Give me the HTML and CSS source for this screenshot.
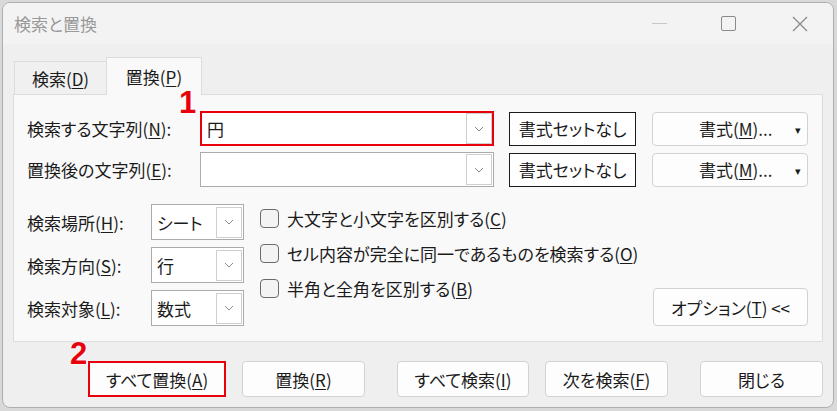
FILE: index.html
```html
<!DOCTYPE html>
<html lang="ja">
<head>
  <meta charset="UTF-8" />
  <title>検索と置換</title>
  <link rel="stylesheet" href="styles.css">
</head>
<body>
  <div class="window">
    <!-- タイトルバー -->
    <div class="titlebar">
      <span class="title">検索と置換</span>
      <div class="controls">
        <span class="ctrl-min"></span>
        <span class="ctrl-max"></span>
        <svg class="ctrl-close" width="16" height="16" viewBox="0 0 16 16">
          <path d="M1 1 L15 15 M15 1 L1 15" stroke="#8a8a8a" stroke-width="1.3" fill="none"/>
        </svg>
      </div>
    </div>

    <!-- タブ -->
    <div class="tabs">
      <div class="tab">検索(<u>D</u>)</div>
      <div class="tab active">置換(<u>P</u>)</div>
    </div>

    <div class="panel">
      <div class="field-row">
        <label class="field-label">検索する文字列(<u>N</u>):</label>
        <div class="combo combo-marked">
          <span class="combo-text">円</span>
          <span class="drop"><svg width="10" height="6" viewBox="0 0 10 6"><path d="M1 1 L5 5 L9 1" stroke="#8c8c8c" fill="none"/></svg></span>
        </div>
        <button class="plain-btn">書式セットなし</button>
        <button class="format-btn"><span>書式(<u>M</u>)...</span><span class="caret">▾</span></button>
      </div>
      <div class="field-row">
        <label class="field-label">置換後の文字列(<u>E</u>):</label>
        <div class="combo">
          <span class="combo-text"></span>
          <span class="drop"><svg width="10" height="6" viewBox="0 0 10 6"><path d="M1 1 L5 5 L9 1" stroke="#8c8c8c" fill="none"/></svg></span>
        </div>
        <button class="plain-btn">書式セットなし</button>
        <button class="format-btn"><span>書式(<u>M</u>)...</span><span class="caret">▾</span></button>
      </div>

      <div class="options">
        <div class="select-list">
          <div class="select-row">
            <label class="select-label">検索場所(<u>H</u>):</label>
            <div class="select"><span class="select-text">シート</span><span class="drop"><svg width="10" height="6" viewBox="0 0 10 6"><path d="M1 1 L5 5 L9 1" stroke="#8c8c8c" fill="none"/></svg></span></div>
          </div>
          <div class="select-row">
            <label class="select-label">検索方向(<u>S</u>):</label>
            <div class="select"><span class="select-text">行</span><span class="drop"><svg width="10" height="6" viewBox="0 0 10 6"><path d="M1 1 L5 5 L9 1" stroke="#8c8c8c" fill="none"/></svg></span></div>
          </div>
          <div class="select-row">
            <label class="select-label">検索対象(<u>L</u>):</label>
            <div class="select"><span class="select-text">数式</span><span class="drop"><svg width="10" height="6" viewBox="0 0 10 6"><path d="M1 1 L5 5 L9 1" stroke="#8c8c8c" fill="none"/></svg></span></div>
          </div>
        </div>

        <div class="check-list">
          <div class="check-row"><span class="box"></span>大文字と小文字を区別する(<u>C</u>)</div>
          <div class="check-row"><span class="box"></span>セル内容が完全に同一であるものを検索する(<u>O</u>)</div>
          <div class="check-row"><span class="box"></span>半角と全角を区別する(<u>B</u>)</div>
        </div>

        <button class="option-btn">オプション(<u>T</u>) &lt;&lt;</button>
      </div>
    </div>

    <div class="actions">
      <button class="act-btn act-marked">すべて置換(<u>A</u>)</button>
      <button class="act-btn">置換(<u>R</u>)</button>
      <button class="act-btn act-wide">すべて検索(<u>I</u>)</button>
      <button class="act-btn">次を検索(<u>F</u>)</button>
      <button class="act-btn act-close">閉じる</button>
    </div>

    <!-- 注釈 -->
    <span class="badge badge-1">1</span>
    <span class="badge badge-2">2</span>
  </div>
</body>
</html>
```

FILE: styles.css
```css
* {
  box-sizing: border-box;
}
body {
  margin: 0;
  padding: 2px 3px 3px 2px;
  width: 837px;
  height: 411px;
  overflow: hidden;
  background-color: #d9d9d9;
  font-family: "Noto Sans CJK JP", "Noto Sans", sans-serif;
  font-feature-settings: "palt";
  font-size: 17px;
  color: #1b1b1b;
}
u {
  text-underline-offset: 2px;
}
button {
  font: inherit;
  color: inherit;
  margin: 0;
  padding: 0;
  cursor: pointer;
}
.window {
  position: relative;
  height: 406px;
  border: 1px solid #aeaeae;
  border-radius: 8px;
  background-color: #efefef;
  overflow: hidden;
}
.titlebar {
  height: 41px;
  display: flex;
  align-items: center;
  padding-left: 11px;
  background-color: #f3f3f3;
}
.title {
  font-size: 17px;
  color: #999999;
}
.controls {
  margin-left: auto;
  display: flex;
  align-items: center;
  padding-right: 25px;
}
.ctrl-min {
  width: 15px;
  height: 1px;
  background-color: #c8c8c8;
  margin-right: 54px;
}
.ctrl-max {
  width: 15px;
  height: 15px;
  border: 1.3px solid #8a8a8a;
  border-radius: 2px;
  margin-right: 56px;
}
.tabs {
  display: flex;
  align-items: flex-end;
  padding: 13px 0 0 11px;
  height: 50px;
}
.tab {
  width: 92px;
  height: 33px;
  display: flex;
  align-items: center;
  justify-content: center;
  border: 1px solid #dcdcdc;
  border-bottom: none;
  border-right: none;
  background-color: #f0f0f0;
}
.tab.active {
  width: 96px;
  height: 38px;
  margin-bottom: -1px;
  position: relative;
  z-index: 1;
  border-right: 1px solid #dcdcdc;
  background-color: #f9f9f9;
}
.panel {
  margin: 0 10px;
  height: 248px;
  border: 1px solid #dcdcdc;
  background-color: #f9f9f9;
  padding: 16px 14px 0 13px;
}
.field-row {
  display: flex;
  align-items: center;
  height: 35px;
  margin-bottom: 6px;
}
.field-label {
  width: 173px;
}
.combo {
  width: 294px;
  height: 35px;
  display: flex;
  align-items: center;
  border: 1px solid #ababab;
  background-color: #ffffff;
  padding: 1px 1px 1px 6px;
}
.combo-marked {
  border: 2px solid #e8000b;
  padding: 0 0 0 5px;
}
.combo-text {
  flex: 1;
}
.drop {
  width: 26px;
  height: 31px;
  display: flex;
  align-items: center;
  justify-content: center;
  border: 1px solid #cfcfcf;
  background-color: #ffffff;
}
.plain-btn {
  width: 127px;
  height: 34px;
  margin-left: 15px;
  border: 1px solid #1b1b1b;
  background-color: #ffffff;
}
.format-btn {
  width: 156px;
  height: 34px;
  margin-left: 16px;
  display: flex;
  align-items: center;
  padding: 0 6px 0 46px;
  border: 1px solid #d2d2d2;
  border-radius: 4px;
  background-color: #fdfdfd;
}
.caret {
  margin-left: auto;
  font-size: 11px;
}
.options {
  display: flex;
  align-items: flex-end;
  margin-top: 17px;
}
.select-list {
  display: flex;
  flex-direction: column;
  gap: 7px;
}
.select-row {
  display: flex;
  align-items: center;
}
.select-label {
  width: 124px;
}
.select {
  width: 93px;
  height: 36px;
  display: flex;
  align-items: center;
  padding: 1px 1px 1px 5px;
  border: 1px solid #ababab;
  background-color: #ffffff;
}
.select-text {
  flex: 1;
}
.check-list {
  align-self: flex-start;
  margin: -3px 0 0 16px;
}
.check-row {
  height: 35px;
  display: flex;
  align-items: center;
}
.box {
  width: 19px;
  height: 19px;
  margin-right: 8px;
  border: 1px solid #6b6b6b;
  border-radius: 4px;
  background-color: #f3f3f3;
}
.option-btn {
  margin-left: auto;
  width: 155px;
  height: 38px;
  border: 1px solid #d2d2d2;
  border-radius: 4px;
  background-color: #fdfdfd;
}
.actions {
  display: flex;
  padding: 19px 0 0 85px;
}
.act-btn {
  width: 123px;
  height: 36px;
  margin-right: 16px;
  border: 1px solid #d2d2d2;
  border-radius: 4px;
  background-color: #fdfdfd;
}
.act-marked {
  width: 138px;
  border: 2px solid #e8000b;
  border-radius: 0;
}
.act-wide {
  width: 132px;
  margin-left: 16px;
}
.act-close {
  margin-left: 16px;
  margin-right: 0;
}
.badge {
  position: absolute;
  z-index: 2;
  font-family: "Liberation Sans", Arial, sans-serif;
  font-weight: bold;
  font-size: 31px;
  color: #e8000b;
  line-height: 1;
  text-shadow: 0 0 2px #ffffff, 0 0 2px #ffffff;
}
.badge-1 {
  left: 176px;
  top: 84px;
}
.badge-2 {
  left: 67px;
  top: 335px;
}
```
